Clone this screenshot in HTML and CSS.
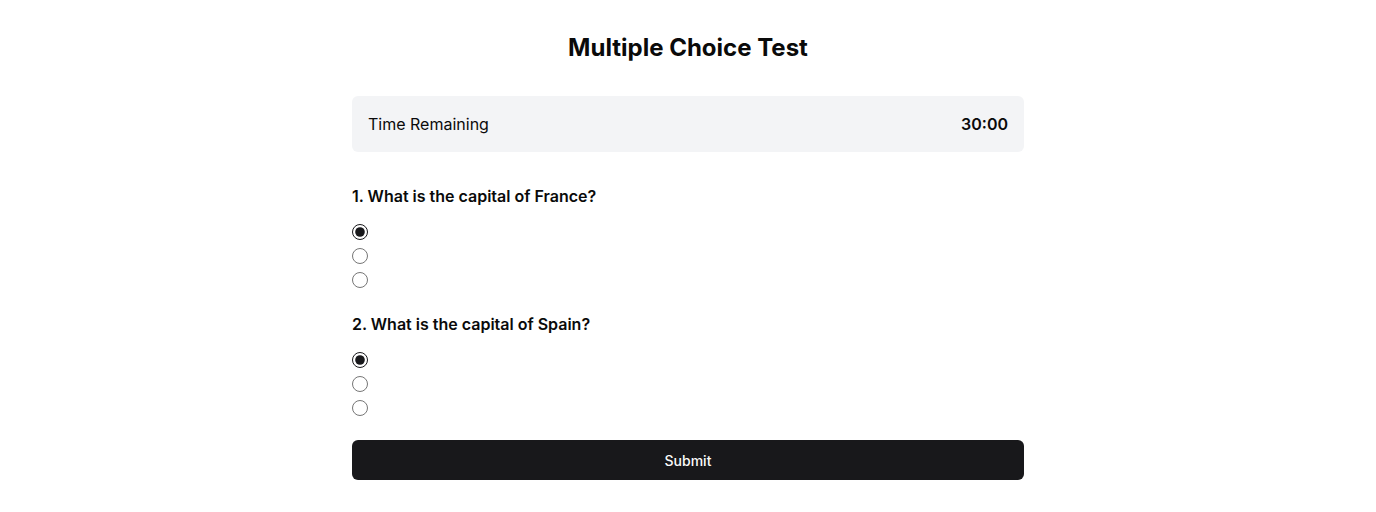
FILE: index.html
```html
<!DOCTYPE html>
<html>
<head>
<meta charset="utf-8">
<link rel="stylesheet" href="styles.css">
</head>
<body>
<main class="container">
  <h1 class="title">Multiple Choice Test</h1>
  <div class="timer">
    <span class="timer-label">Time Remaining</span>
    <span class="timer-value">30:00</span>
  </div>
  <form class="quiz">
    <section class="question">
      <h2 class="question-text">1. What is the capital of France?</h2>
      <div class="options">
        <label class="option"><input type="radio" name="q1" checked></label>
        <label class="option"><input type="radio" name="q1"></label>
        <label class="option"><input type="radio" name="q1"></label>
      </div>
    </section>
    <section class="question">
      <h2 class="question-text">2. What is the capital of Spain?</h2>
      <div class="options">
        <label class="option"><input type="radio" name="q2" checked></label>
        <label class="option"><input type="radio" name="q2"></label>
        <label class="option"><input type="radio" name="q2"></label>
      </div>
    </section>
    <button type="button" class="submit">Submit</button>
  </form>
</main>
</body>
</html>
```

FILE: styles.css
```css
* { box-sizing: border-box; }
body {
  margin: 0;
  font-family: Inter, "Noto Sans", sans-serif;
  color: #0a0a0a;
  background: #fff;
}
.container {
  max-width: 672px;
  margin: 0 auto;
  padding: 32px 0;
}
.title {
  margin: 0 0 32px;
  font-size: 24px;
  line-height: 32px;
  font-weight: 700;
  text-align: center;
}
.timer {
  display: flex;
  justify-content: space-between;
  align-items: center;
  background: #f3f4f6;
  border-radius: 6px;
  padding: 16px;
  font-size: 16px;
  line-height: 24px;
  margin-bottom: 32px;
}
.timer-value { font-weight: 600; }
.question { margin-bottom: 24px; }
.question-text {
  margin: 0 0 16px;
  font-size: 16px;
  line-height: 24px;
  font-weight: 600;
}
.options {
  display: flex;
  flex-direction: column;
  gap: 8px;
}
.option { display: flex; height: 16px; }
.option input {
  margin: 0;
  width: 16px;
  height: 16px;
  accent-color: #18181b;
}
.submit {
  display: block;
  width: 100%;
  height: 40px;
  border: 0;
  border-radius: 6px;
  background: #18181b;
  color: #fafafa;
  font-family: Inter, "Noto Sans", sans-serif;
  font-size: 14px;
  font-weight: 500;
}
```
